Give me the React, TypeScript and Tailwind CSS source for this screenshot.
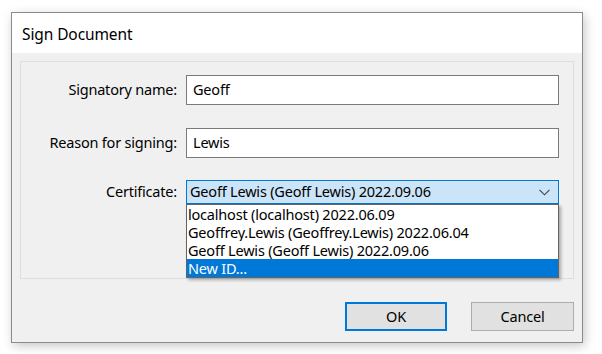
export default function App() {
  const items = [
    'localhost (localhost) 2022.06.09',
    'Geoffrey.Lewis (Geoffrey.Lewis) 2022.06.04',
    'Geoff Lewis (Geoff Lewis) 2022.09.06',
  ];

  return (
    <div
      className="w-[602px] h-[354px] bg-white pt-[12px] pl-[11px] text-[14.5px] tracking-[-0.2px] text-black"
      style={{ fontFamily: '"Noto Sans", "Open Sans", sans-serif' }}
    >
      {/* Dialog window */}
      <div className="flex h-[331px] w-[572px] flex-col border border-[#8a8a8a] shadow-[2px_3px_10px_rgba(0,0,0,0.22)]">
        {/* Title */}
        <div className="flex h-[40px] items-center bg-white px-[10px] pt-[3px] text-[15.5px] leading-none tracking-[-0.1px]">Sign Document</div>

        {/* Body */}
        <div className="flex flex-1 flex-col bg-[#f0f0f0] px-[8px] pt-[8px]">
          <div className="h-[218px] border border-[#dedede] pt-[13px]">
            <div className="grid grid-cols-[156px_373px] items-center gap-x-[9px]">
              <span className="text-right">Signatory name:</span>
              <div className="flex h-[30px] items-center border border-[#7a7a7a] bg-white px-[6px]">Geoff</div>

              <div className="col-span-2 h-[23px]" />

              <span className="text-right">Reason for signing:</span>
              <div className="flex h-[30px] items-center border border-[#7a7a7a] bg-white px-[6px]">Lewis</div>

              <div className="col-span-2 h-[22px]" />

              <span className="text-right">Certificate:</span>
              <div className="relative">
                <div className="flex h-[24px] items-center justify-between border border-[#0078d7] bg-[#cce4f7] pl-[3px] pr-[8px]">
                  <span>Geoff Lewis (Geoff Lewis) 2022.09.06</span>
                  <svg width="11" height="7" viewBox="0 0 11 7" fill="none">
                    <path d="M0.5 0.8 L5.5 5.8 L10.5 0.8" stroke="#404040" strokeWidth="1.1" />
                  </svg>
                </div>
                {/* Dropdown list */}
                <div className="absolute left-0 top-full z-10 w-full border border-[#646464] bg-white shadow-[2px_2px_3px_rgba(0,0,0,0.3)]">
                  {items.map((item) => (
                    <div key={item} className="h-[18px] overflow-hidden pl-[1px] leading-[18px]">
                      {item}
                    </div>
                  ))}
                  <div className="h-[18px] overflow-hidden bg-[#0078d7] pl-[1px] leading-[18px] text-white">New ID...</div>
                </div>
              </div>
            </div>
          </div>

          {/* Buttons */}
          <div className="mt-[23px] flex justify-end gap-[24px]">
            <button className="h-[29px] w-[102px] border-2 border-[#0078d7] bg-[#e1e1e1]">OK</button>
            <button className="h-[29px] w-[103px] border border-[#adadad] bg-[#e1e1e1]">Cancel</button>
          </div>
        </div>
      </div>
    </div>
  );
}
